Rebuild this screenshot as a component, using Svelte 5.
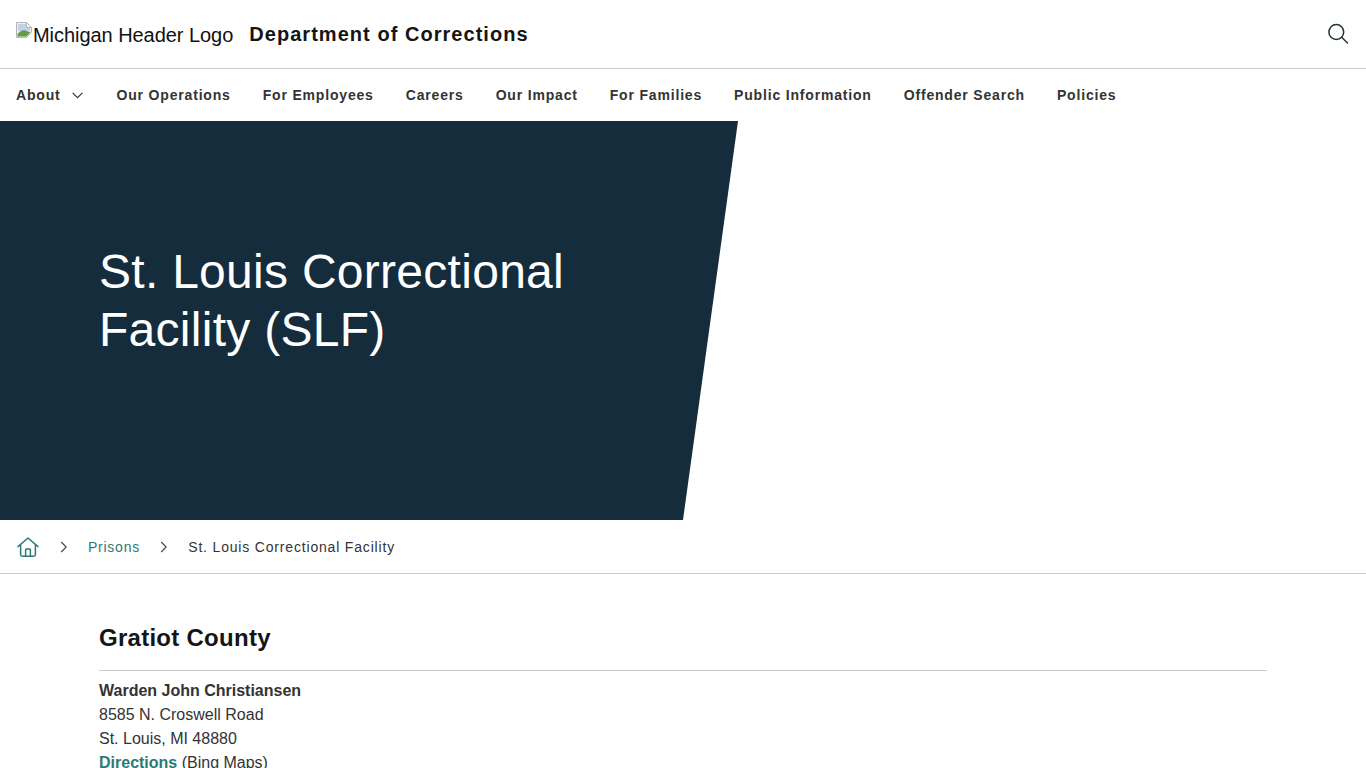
<script lang='ts'>
	const navItems = ['Our Operations', 'For Employees', 'Careers', 'Our Impact', 'For Families', 'Public Information', 'Offender Search', 'Policies']
</script>

<header>
	<div class='top'>
		<a class='brand' href='#top'>
			<span class='logo-alt'>
				<svg class='broken' width='16' height='16' viewBox='0 0 16 16'>
					<path d='M.5.5h10l5 5v5l-5 5H.5z' fill='#eef1f0' stroke='#b4b4b4' />
					<path d='M10.5.5v5h5z' fill='#fff' stroke='#b4b4b4' />
					<path d='M2 2h8v4h4v3H2z' fill='#c0d2ec' />
					<path d='M1.5 14.5V12q4-5 8-3.500t5 1.500l-4 4.500z' fill='#5f9e47' />
				</svg><span class='alt-text'>Michigan Header Logo</span>
			</span>
			<span class='dept'>Department of Corrections</span>
		</a>
		<button class='search' aria-label='Search'>
			<svg width='22' height='22' viewBox='0 0 22 22' fill='none' stroke='#263238' stroke-width='1.5'>
				<circle cx='8.3' cy='9' r='7.4' />
				<path d='M13.7 14.3l5.8 5.7' stroke-linecap='round' />
			</svg>
		</button>
	</div>
	<nav>
		<a href='#about' class='has-sub'>
			About
			<svg width='11' height='7' viewBox='0 0 11 7' fill='none' stroke='#333' stroke-width='1.1'><path d='M.6.8l4.9 4.9L10.4.8' /></svg>
		</a>
		{#each navItems as item}
			<a href='#item'>{item}</a>
		{/each}
	</nav>
</header>

<section class='hero'>
	<div class='hero-text'>
		<h1>St. Louis Correctional Facility (SLF)</h1>
	</div>
</section>

<div class='crumbs'>
	<a class='home' href='#home' aria-label='Home'>
		<svg width='22' height='20' viewBox='0 0 22 20' fill='none' stroke='#2b7a78' stroke-width='1.5'>
			<path d='M1 9.600L11 1l10 8.600' stroke-linejoin='round' stroke-linecap='round' />
			<path d='M3.600 8v9.500q0 1.700 1.700 1.700h11.400q1.700 0 1.700-1.700V8' />
			<path d='M8.600 19v-6.200q0-.8.8-.8h3.200q.8 0 .8.8V19' />
		</svg>
	</a>
	<svg class='sep' width='8' height='12' viewBox='0 0 8 12' fill='none' stroke='#444' stroke-width='1.1'><path d='M1.200 1l5 5-5 5' /></svg>
	<a class='crumb-link' href='#prisons'>Prisons</a>
	<svg class='sep' width='8' height='12' viewBox='0 0 8 12' fill='none' stroke='#444' stroke-width='1.1'><path d='M1.200 1l5 5-5 5' /></svg>
	<span class='crumb-current'>St. Louis Correctional Facility</span>
</div>

<main>
	<h2>Gratiot County</h2>
	<p>
		<strong>Warden John Christiansen</strong><br />
		8585 N. Croswell Road<br />
		St. Louis, MI 48880<br />
		<a href='#directions'>Directions</a> (Bing Maps)
	</p>
</main>

<style>
	:global(body) {
		margin: 0;
		background: #fff;
		font-family: 'Liberation Sans', Arial, sans-serif;
		color: #333;
		overflow: hidden;
	}

	a {
		text-decoration: none;
		color: inherit;
	}

	.top {
		height: 68px;
		display: flex;
		align-items: center;
		justify-content: space-between;
		padding: 0 16px;
		border-bottom: 1px solid #ccc;
	}

	.brand {
		display: flex;
		align-items: center;
		gap: 16px;
	}

	.logo-alt {
		font-size: 20px;
		color: #111;
		line-height: 24px;
	}

	.alt-text {
		display: inline-block;
		padding-top: 2px;
		margin-left: 1px;
		letter-spacing: -0.05px;
	}

	.broken {
		vertical-align: top;
		margin-top: 1px;
	}

	.dept {
		font-size: 20px;
		font-weight: 700;
		letter-spacing: 1.04px;
		color: #151515;
	}

	.search {
		border: 0;
		background: none;
		padding: 0;
		display: flex;
	}

	nav {
		height: 52px;
		display: flex;
		align-items: center;
		gap: 32px;
		padding: 0 16px;
	}

	nav a {
		font-size: 14px;
		font-weight: 700;
		letter-spacing: 0.82px;
		color: #333;
	}

	.has-sub {
		display: flex;
		align-items: center;
		gap: 11px;
		margin-right: 2px;
	}

	.hero {
		height: 399px;
		padding-bottom: 40px;
		box-sizing: border-box;
		background: #152c3d;
		clip-path: polygon(0 0, 738px 0, 683px 100%, 0 100%);
		display: flex;
		align-items: center;
	}

	.hero-text {
		padding-left: 99px;
		width: 530px;
	}

	h1 {
		margin: 0;
		font-size: 48px;
		font-weight: 400;
		line-height: 58px;
		letter-spacing: 0.28px;
		color: #fff;
	}

	.crumbs {
		height: 53px;
		display: flex;
		align-items: center;
		padding: 0 17px;
		border-bottom: 1px solid #ccc;
		font-size: 14px;
		letter-spacing: 0.75px;
	}

	.home {
		display: flex;
	}

	.sep {
		margin: 0 20px 0 21px;
	}

	.crumb-link {
		color: #2b7a78;
		margin-right: -0.7px;
	}

	.crumb-current {
		color: #333;
		letter-spacing: 0.82px;
	}

	main {
		padding: 0 99px;
	}

	h2 {
		margin: 0;
		padding: 50px 0 18px;
		font-size: 24px;
		line-height: 28px;
		font-weight: 700;
		letter-spacing: 0.27px;
		color: #151515;
		border-bottom: 1px solid #ccc;
	}

	p {
		margin: 8px 0 0;
		font-size: 16px;
		line-height: 24px;
		color: #333;
	}

	p a {
		font-weight: 700;
		color: #2b7a78;
	}
</style>
